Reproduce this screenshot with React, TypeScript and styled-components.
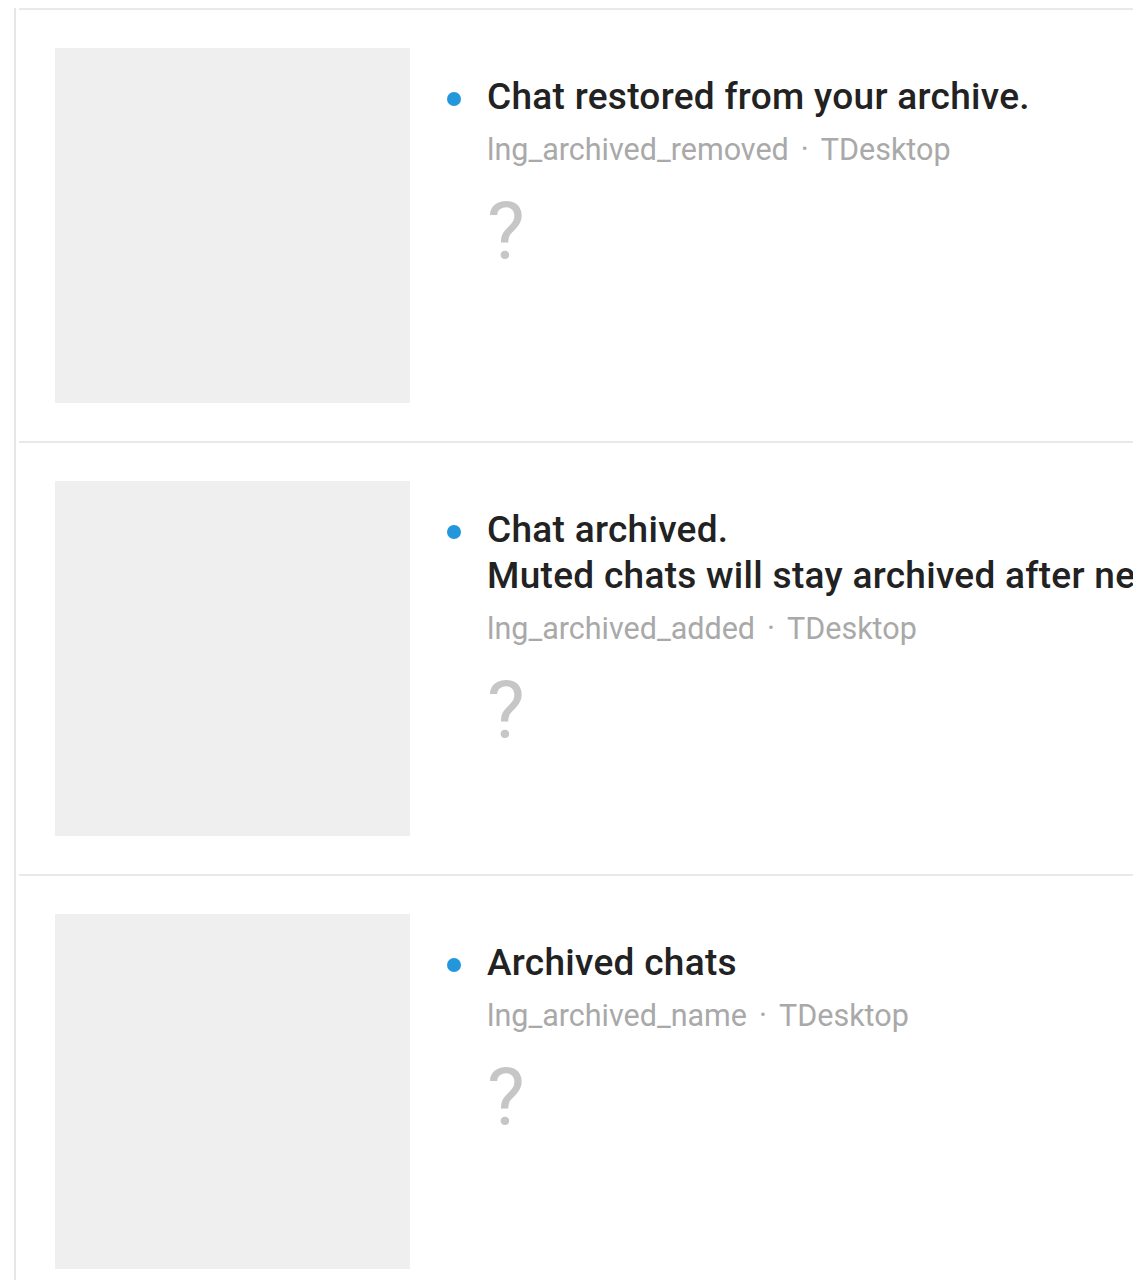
import React from 'react';
import styled, { createGlobalStyle } from 'styled-components';

const GlobalStyle = createGlobalStyle`
  html, body {
    margin: 0;
    padding: 0;
    background: #fff;
    overflow: hidden;
  }
  body {
    font-family: Roboto, "Liberation Sans", Arial, sans-serif;
  }
`;

const Page = styled.div`
  padding: 8px 0 0 14px;
`;

const List = styled.div`
  border-left: 2px solid #e6e6e6;
  padding-left: 3px;
`;

const Row = styled.div`
  display: flex;
  align-items: flex-start;
  border-top: 2px solid #e9e9e9;
  padding: 38px 0 38px 36px;
`;

const Preview = styled.div`
  flex: 0 0 355px;
  height: 355px;
  background: #efefef;
`;

const Info = styled.div`
  display: flex;
  align-items: flex-start;
  padding: 26px 0 0 37px;
  min-width: 0;
`;

const Dot = styled.span`
  flex: 0 0 14px;
  width: 14px;
  height: 14px;
  border-radius: 50%;
  background: #2496dc;
  margin-top: 18px;
  margin-right: 26px;
`;

const Body = styled.div`
  display: flex;
  flex-direction: column;
`;

const Title = styled.div`
  font-size: 37px;
  line-height: 46px;
  letter-spacing: 0.3px;
  font-weight: 500;
  color: #222;
  white-space: pre;
`;

const Meta = styled.div`
  margin-top: 12px;
  font-size: 30.5px;
  line-height: 36px;
  color: #a9a9a9;
  white-space: pre;
`;

const Sep = styled.span`
  padding: 0 12px;
`;

const Unknown = styled.div`
  margin-top: 24px;
  font-size: 80px;
  line-height: 1;
  color: #c6c6c6;
`;

const strings = [
  { text: 'Chat restored from your archive.', key: 'lng_archived_removed' },
  {
    text: 'Chat archived.\nMuted chats will stay archived after new messages arrive.',
    key: 'lng_archived_added',
  },
  { text: 'Archived chats', key: 'lng_archived_name' },
];

const App: React.FC = () => {
  return (
    <Page>
      <GlobalStyle />
      <List>
        {strings.map((s) =>
          <Row key={s.key}>
            <Preview />
            <Info>
              <Dot />
              <Body>
                <Title>{s.text}</Title>
                <Meta>{s.key}<Sep>·</Sep>TDesktop</Meta>
                <Unknown>?</Unknown>
              </Body>
            </Info>
          </Row>,
        )}
      </List>
    </Page>
  );
};

export default App;
